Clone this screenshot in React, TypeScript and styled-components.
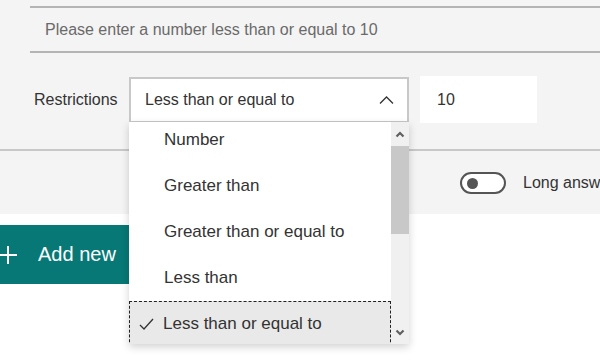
import React from 'react';
import styled, { createGlobalStyle } from 'styled-components';

const GlobalStyle = createGlobalStyle`
  body {
    margin: 0;
    background: #ffffff;
    font-family: "Liberation Sans", Arial, sans-serif;
    overflow: hidden;
  }
`;

const Page = styled.div`
  position: relative;
  width: 600px;
  height: 362px;
  overflow: hidden;
`;

const Panel = styled.div`
  background: #f4f4f4;
  height: 214px;
  padding-top: 6px;
  box-sizing: border-box;
`;

const Hint = styled.div`
  margin-left: 30px;
  height: 47px;
  border-top: 2px solid #b4b4b4;
  border-bottom: 2px solid #b4b4b4;
  box-sizing: border-box;
  display: flex;
  align-items: center;
  padding-left: 15px;
  font-size: 16px;
  color: #6a6a6a;
  white-space: nowrap;
`;

const RestrictionRow = styled.div`
  display: flex;
  align-items: center;
  margin-top: 23px;
  padding-left: 34px;
  height: 47px;
`;

const Label = styled.span`
  font-size: 16px;
  color: #333;
  width: 95px;
  flex-shrink: 0;
`;

const Select = styled.div`
  width: 280px;
  height: 46px;
  flex-shrink: 0;
  box-sizing: border-box;
  border: 2px solid #c8c8c8;
  background: #fff;
  display: flex;
  align-items: center;
  justify-content: space-between;
  padding: 0 13px 0 14px;
  font-size: 16px;
  color: #333;
`;

const NumberInput = styled.div`
  width: 117px;
  height: 47px;
  flex-shrink: 0;
  margin-left: 11px;
  box-sizing: border-box;
  background: #fff;
  display: flex;
  align-items: center;
  padding-left: 17px;
  font-size: 16px;
  color: #333;
`;

const Footer = styled.div`
  margin-top: 26px;
  border-top: 2px solid #c8c8c8;
  height: 64px;
  display: flex;
  align-items: center;
  padding-left: 460px;
  gap: 17px;
`;

const Toggle = styled.div`
  width: 46px;
  height: 22px;
  flex-shrink: 0;
  box-sizing: border-box;
  border: 2px solid #555;
  border-radius: 11px;
  background: #fff;
  display: flex;
  align-items: center;
  padding-left: 5px;
`;

const Knob = styled.div`
  width: 11px;
  height: 11px;
  border-radius: 50%;
  background: #555;
`;

const ToggleLabel = styled.span`
  font-size: 16px;
  color: #333;
  white-space: nowrap;
`;

const AddButton = styled.div`
  margin-top: 11px;
  width: 140px;
  height: 59px;
  background: #077876;
  color: #fff;
  display: flex;
  align-items: center;
  gap: 20px;
  font-size: 20px;
`;

const Dropdown = styled.div`
  position: absolute;
  left: 129px;
  top: 122px;
  width: 280px;
  height: 222px;
  background: #fff;
  box-shadow: 0 3px 8px rgba(0, 0, 0, 0.18);
  display: flex;
`;

const List = styled.div`
  flex: 1;
  overflow: hidden;
`;

const ListInner = styled.div`
  margin-top: -5px;
`;

const Option = styled.div<{ selected?: boolean }>`
  height: 46px;
  box-sizing: border-box;
  display: flex;
  align-items: center;
  padding-left: ${({ selected }) => (selected ? '9px' : '34px')};
  font-size: 17px;
  color: #333;
  background: ${({ selected }) => (selected ? '#e9e9e9' : 'transparent')};
  border: ${({ selected }) => (selected ? '1px dashed #222' : '1px solid transparent')};
  gap: 9px;
  white-space: nowrap;
`;

const ScrollBar = styled.div`
  width: 18px;
  background: #f0f0f0;
  display: flex;
  flex-direction: column;
  align-items: center;
`;

const ScrollArrow = styled.div`
  height: 24px;
  display: flex;
  align-items: center;
  justify-content: center;
`;

const Thumb = styled.div`
  width: 18px;
  height: 88px;
  background: #c8c8c8;
`;

const Spacer = styled.div`
  flex: 1;
`;

const options = ['Number', 'Greater than', 'Greater than or equal to', 'Less than', 'Less than or equal to'];

export default function App() {
  return (
    <Page>
      <GlobalStyle />
      <Panel>
        <Hint>Please enter a number less than or equal to 10</Hint>
        <RestrictionRow>
          <Label>Restrictions</Label>
          <Select>
            <span>Less than or equal to</span>
            <svg width="15" height="8" viewBox="0 0 15 8">
              <path d="M1 7.5 L7.5 1 L14 7.5" fill="none" stroke="#333" strokeWidth="1.3" />
            </svg>
          </Select>
          <NumberInput>10</NumberInput>
        </RestrictionRow>
        <Footer>
          <Toggle>
            <Knob />
          </Toggle>
          <ToggleLabel>Long answer</ToggleLabel>
        </Footer>
      </Panel>
      <AddButton>
        <svg width="18" height="18" viewBox="0 0 18 18">
          <path d="M0 9 H17 M8 0 V18" stroke="#fff" strokeWidth="2" />
        </svg>
        <span>Add new</span>
      </AddButton>
      <Dropdown>
        <List>
          <ListInner>
            {options.map((o, i) => {
              const selected = i === options.length - 1;
              return (
                <Option key={o} selected={selected}>
                  {selected && (
                    <svg width="15" height="12" viewBox="0 0 15 12">
                      <path d="M1 7 L5 11 L14 1" fill="none" stroke="#333" strokeWidth="1.3" />
                    </svg>
                  )}
                  <span>{o}</span>
                </Option>
              );
            })}
          </ListInner>
        </List>
        <ScrollBar>
          <ScrollArrow>
            <svg width="10" height="7" viewBox="0 0 10 7">
              <path d="M1.5 5.5 L5 2 L8.5 5.5" fill="none" stroke="#606060" strokeWidth="2.2" />
            </svg>
          </ScrollArrow>
          <Thumb />
          <Spacer />
          <ScrollArrow>
            <svg width="10" height="7" viewBox="0 0 10 7">
              <path d="M1.5 1.5 L5 5 L8.5 1.5" fill="none" stroke="#606060" strokeWidth="2.2" />
            </svg>
          </ScrollArrow>
        </ScrollBar>
      </Dropdown>
    </Page>
  );
}
